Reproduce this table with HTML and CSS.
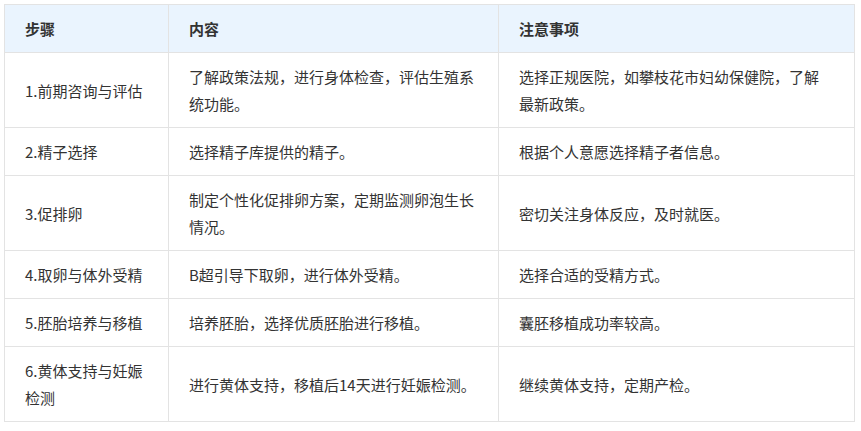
FILE: index.html
```html
<!DOCTYPE html>
<html lang="zh-CN">
<head>
<meta charset="utf-8">
<title>步骤</title>
<link rel="stylesheet" href="styles.css">
</head>
<body>
<table class="steps">
  <colgroup>
    <col class="c1">
    <col class="c2">
    <col class="c3">
  </colgroup>
  <thead>
    <tr><th>步骤</th><th>内容</th><th>注意事项</th></tr>
  </thead>
  <tbody>
    <tr><td>1.前期咨询与评估</td><td>了解政策法规，进行身体检查，评估生殖系统功能。</td><td>选择正规医院，如攀枝花市妇幼保健院，了解最新政策。</td></tr>
    <tr><td>2.精子选择</td><td>选择精子库提供的精子。</td><td>根据个人意愿选择精子者信息。</td></tr>
    <tr><td>3.促排卵</td><td>制定个性化促排卵方案，定期监测卵泡生长情况。</td><td>密切关注身体反应，及时就医。</td></tr>
    <tr><td>4.取卵与体外受精</td><td>B超引导下取卵，进行体外受精。</td><td>选择合适的受精方式。</td></tr>
    <tr><td>5.胚胎培养与移植</td><td>培养胚胎，选择优质胚胎进行移植。</td><td>囊胚移植成功率较高。</td></tr>
    <tr><td>6.黄体支持与妊娠检测</td><td>进行黄体支持，移植后14天进行妊娠检测。</td><td>继续黄体支持，定期产检。</td></tr>
  </tbody>
</table>
</body>
</html>
```

FILE: styles.css
```css
html, body {
  margin: 0;
  padding: 0;
  background: #ffffff;
}
body {
  padding: 4px 0 0 4px;
  font-family: "Noto Sans CJK SC", "Noto Sans", sans-serif;
  font-size: 15px;
  color: #333333;
}
.steps {
  width: 850px;
  table-layout: fixed;
  border-collapse: collapse;
}
.c1 { width: 164px; }
.c2 { width: 330px; }
.c3 { width: 356px; }
.steps th,
.steps td {
  border: 1px solid #e3e3e3;
  padding: 10px 18px 10px 20px;
  line-height: 27px;
  text-align: left;
  vertical-align: middle;
}
.steps td:last-child,
.steps th:last-child {
  padding-right: 26px;
}
.steps th {
  background: #eaf4fe;
  font-weight: 700;
  color: #333333;
}
```
